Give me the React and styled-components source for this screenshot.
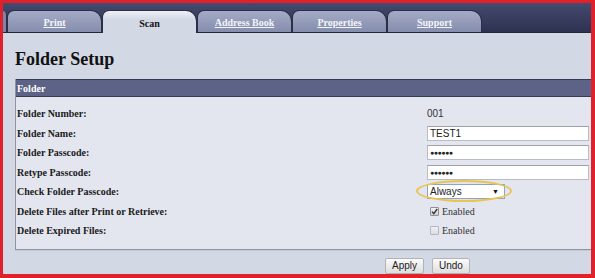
import React from 'react';
import styled, { createGlobalStyle } from 'styled-components';

const GlobalStyle = createGlobalStyle`
  html, body {
    margin: 0;
    padding: 0;
    background: #ffffff;
  }
  * {
    box-sizing: border-box;
  }
`

const Frame = styled.div`
  width: 595px;
  height: 278px;
  border-style: solid;
  border-color: #e0202b;
  border-width: 3px 4px 4px 3px;
  display: flex;
  flex-direction: column;
  background: #d3d8e5;
  font-family: "Liberation Serif", "Times New Roman", serif;
  overflow: hidden;
`

const TopBar = styled.div`
  height: 30px;
  flex: none;
  display: flex;
  align-items: flex-end;
  background: linear-gradient(#444a6e, #2e3251);
  border-bottom: 1px solid #23263b;
`

const TabStub = styled.div`
  width: 4px;
  height: 21px;
  background: #7d85a7;
  border-top-right-radius: 8px;
  border-right: 1px solid #2a2e47;
`

const Tab = styled.div`
  width: 95px;
  height: ${p => (p.active ? '23px' : '22px')};
  margin-bottom: ${p => (p.active ? '-1px' : '0')};
  display: flex;
  align-items: center;
  justify-content: center;
  padding-top: ${p => (p.active ? '3px' : '2px')};
  border: 1px solid #2a2e47;
  border-bottom: none;
  border-radius: 7px 11px 0 0;
  background: ${p => (p.active
    ? 'linear-gradient(#eef0f6, #d3d8e5 40%)'
    : 'linear-gradient(#a4abc6, #858dae)')};
  color: ${p => (p.active ? '#111' : '#f4f5fa')};
  font-size: 10px;
  font-weight: bold;
  text-decoration: ${p => (p.active ? 'none' : 'underline')};
`

const Content = styled.div`
  flex: 1;
  padding-left: 12px;
  display: flex;
  flex-direction: column;
`

const Title = styled.h1`
  margin: 16px 0 9px 0;
  font-size: 18px;
  line-height: 21px;
  font-weight: bold;
  color: #111;
`

const Panel = styled.div`
  background: #e3e6ef;
  border-left: 1px solid #8f93a3;
  border-bottom: 1px solid #8f93a3;
  box-shadow: 0 1px 0 #c4c8d4;
`

const PanelHeader = styled.div`
  height: 18px;
  padding-left: 1px;
  display: flex;
  align-items: center;
  background: #5d6386;
  border-top: 1px solid #353a55;
  border-bottom: 1px solid #353a55;
  color: #ffffff;
  font-size: 10px;
  font-weight: bold;
`

const Rows = styled.div`
  display: grid;
  grid-template-columns: 410px 1fr;
  grid-auto-rows: 19.5px;
  padding: 7px 2px 8px 1px;
`

const Label = styled.div`
  display: flex;
  align-items: center;
  font-size: 10px;
  font-weight: bold;
  color: #1a1a1a;
`

const Value = styled.div`
  display: flex;
  align-items: center;
  font-family: "Liberation Sans", Arial, sans-serif;
  font-size: 10px;
  color: #333;
`

const TextBox = styled.div`
  width: 162px;
  height: 15px;
  background: #ffffff;
  border: 1px solid #b9bcc4;
  border-top-color: #9fa2aa;
  padding-left: 2px;
  display: flex;
  align-items: center;
  font-family: "Liberation Sans", Arial, sans-serif;
  font-size: ${p => (p.secret ? '7px' : '10px')};
  letter-spacing: ${p => (p.secret ? '-0.5px' : '0')};
  color: #222;
`

const SelectWrap = styled.div`
  position: relative;
  display: flex;
  align-items: center;
`

const Select = styled.div`
  width: 78px;
  height: 15px;
  background: #ffffff;
  border: 1px solid #8aa4c6;
  padding: 0 5px 0 2px;
  display: flex;
  align-items: center;
  justify-content: space-between;
  font-family: "Liberation Sans", Arial, sans-serif;
  font-size: 10px;
  color: #222;
`

const Arrow = styled.span`
  font-size: 7px;
  color: #111;
`

const Highlight = styled.div`
  position: absolute;
  left: -11px;
  top: -4px;
  width: 96px;
  height: 22px;
  border: 2px solid #e9c451;
  border-radius: 50%;
  pointer-events: none;
`

const CheckRow = styled.div`
  display: flex;
  align-items: center;
  gap: 3px;
  padding-left: 3px;
  font-family: "Liberation Serif", "Times New Roman", serif;
  font-size: 10px;
  color: #333;
`

const Box = styled.span`
  width: 9px;
  height: 9px;
  border: 1px solid ${p => (p.checked ? '#8d8f95' : '#b4b7bf')};
  border-radius: 1px;
  background: ${p => (p.checked ? 'linear-gradient(#f2f2f2, #cfd0d4)' : 'linear-gradient(#f0f1f4, #dcdee4)')};
  display: flex;
  align-items: center;
  justify-content: center;
`

const Footer = styled.div`
  flex: 1;
  display: flex;
  align-items: flex-start;
  gap: 8px;
  padding: 8px 0 0 370px;
`

const Button = styled.div`
  height: 16px;
  padding: 0 6px;
  display: flex;
  align-items: center;
  border: 1px solid #b3b3b3;
  border-radius: 2px;
  background: linear-gradient(#fbfbfb, #dedede);
  font-family: "Liberation Sans", Arial, sans-serif;
  font-size: 10px;
  color: #222;
`

const Check = () => (
  <svg width="7" height="7" viewBox="0 0 7 7">
    <path d="M1 3.6 L2.8 5.6 L6.2 1" fill="none" stroke="#333" strokeWidth="1.4" />
  </svg>
)

const tabs = ['Print', 'Scan', 'Address Book', 'Properties', 'Support']

export default function App() {
  return (
    <>
      <GlobalStyle />
      <Frame>
        <TopBar>
          <TabStub />
          {tabs.map(t => (
            <Tab key={t} active={t === 'Scan'}>{t}</Tab>
          ))}
        </TopBar>
        <Content>
          <Title>Folder Setup</Title>
          <Panel>
            <PanelHeader>Folder</PanelHeader>
            <Rows>
              <Label>Folder Number:</Label>
              <Value>001</Value>
              <Label>Folder Name:</Label>
              <Value><TextBox>TEST1</TextBox></Value>
              <Label>Folder Passcode:</Label>
              <Value><TextBox secret>●●●●●●</TextBox></Value>
              <Label>Retype Passcode:</Label>
              <Value><TextBox secret>●●●●●●</TextBox></Value>
              <Label>Check Folder Passcode:</Label>
              <Value>
                <SelectWrap>
                  <Select>Always<Arrow>▼</Arrow></Select>
                  <Highlight />
                </SelectWrap>
              </Value>
              <Label>Delete Files after Print or Retrieve:</Label>
              <CheckRow><Box checked><Check /></Box>Enabled</CheckRow>
              <Label>Delete Expired Files:</Label>
              <CheckRow><Box />Enabled</CheckRow>
            </Rows>
          </Panel>
          <Footer>
            <Button>Apply</Button>
            <Button>Undo</Button>
          </Footer>
        </Content>
      </Frame>
    </>
  );
}
